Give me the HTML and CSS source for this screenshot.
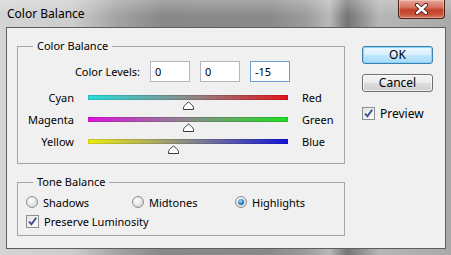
FILE: index.html
```html
<!DOCTYPE html>
<html lang="en">
<head>
  <meta charset="UTF-8">
  <title>Color Balance</title>
  <link rel="stylesheet" href="styles.css">
</head>
<body>

  <div class="window">
    <div class="titlebar">
      <span class="title">Color Balance</span>
      <button class="close">
        <svg width="15" height="12" viewBox="0 0 15 12">
          <path d="M3 2 L12 10 M12 2 L3 10" stroke="#4a1a12" stroke-width="4.2" stroke-linecap="round"/>
          <path d="M3 2 L12 10 M12 2 L3 10" stroke="#fff" stroke-width="2.4" stroke-linecap="round"/>
        </svg>
      </button>
    </div>

    <div class="client">
      <div class="groups">
        <fieldset class="group balance">
          <legend>Color Balance</legend>
          <div class="levels">
            <label>Color Levels:</label>
            <input class="num" value="0">
            <input class="num" value="0">
            <input class="num focus" value="-15">
          </div>

          <div class="slider">
            <span class="from">Cyan</span>
            <div class="bar cyan-red">
              <svg class="thumb" style="left: 50%" width="11" height="9" viewBox="0 0 11 9"><path d="M0.5 8.5 V6.5 Q0.5 5.2 2 4.3 L5.5 0.8 L9 4.3 Q10.5 5.2 10.5 6.5 V8.5 Z" fill="#fff" stroke="#3a3a3a"/></svg>
            </div>
            <span>Red</span>
          </div>
          <div class="slider">
            <span class="from">Magenta</span>
            <div class="bar magenta-green">
              <svg class="thumb" style="left: 50%" width="11" height="9" viewBox="0 0 11 9"><path d="M0.5 8.5 V6.5 Q0.5 5.2 2 4.3 L5.5 0.8 L9 4.3 Q10.5 5.2 10.5 6.5 V8.5 Z" fill="#fff" stroke="#3a3a3a"/></svg>
            </div>
            <span>Green</span>
          </div>
          <div class="slider">
            <span class="from">Yellow</span>
            <div class="bar yellow-blue">
              <svg class="thumb" style="left: 42.5%" width="11" height="9" viewBox="0 0 11 9"><path d="M0.5 8.5 V6.5 Q0.5 5.2 2 4.3 L5.5 0.8 L9 4.3 Q10.5 5.2 10.5 6.5 V8.5 Z" fill="#fff" stroke="#3a3a3a"/></svg>
            </div>
            <span>Blue</span>
          </div>
        </fieldset>

        <fieldset class="group tone">
          <legend>Tone Balance</legend>
          <div class="radios">
            <label class="option"><span class="radio"></span>Shadows</label>
            <label class="option"><span class="radio"></span>Midtones</label>
            <label class="option"><span class="radio on"></span>Highlights</label>
          </div>
          <label class="option check-row">
            <span class="check"><svg width="11" height="11" viewBox="0 0 11 11"><path d="M2 5.5 L4.4 8.3 L9.2 1.8" fill="none" stroke="#3b4d8c" stroke-width="1.9"/></svg></span>
            Preserve Luminosity
          </label>
        </fieldset>
      </div>

      <div class="actions">
        <button class="btn default">OK</button>
        <button class="btn">Cancel</button>
        <label class="option preview">
          <span class="check"><svg width="11" height="11" viewBox="0 0 11 11"><path d="M2 5.5 L4.4 8.3 L9.2 1.8" fill="none" stroke="#3b4d8c" stroke-width="1.9"/></svg></span>
          Preview
        </label>
      </div>
    </div>
  </div>

</body>
</html>
```

FILE: styles.css
```css
* {
  box-sizing: border-box;
}
body {
  margin: 0;
  font-family: "Noto Sans", "Open Sans", sans-serif;
  font-size: 11px;
  color: #000;
  background: #fff;
}
.window {
  width: 451px;
  height: 255px;
  display: flex;
  flex-direction: column;
  background: linear-gradient(90deg, #d4d4d4 0, #cdcdcd 16%, #a3a3a3 26%, #888 36%, #8a8a8a 60%, #9c9c9c 68%, #b9b9b9 73%, #747474 77%, #909090 80%, #b6b6b6 84%, #a9a9a9 100%);
}
.titlebar {
  height: 27px;
  display: flex;
  justify-content: space-between;
  align-items: flex-start;
  padding: 0 6px 0 7px;
  background: linear-gradient(180deg, rgba(255,255,255,0.25), rgba(255,255,255,0) 60%);
}
.title {
  font-size: 12px;
  line-height: 14px;
  margin-top: 7px;
}
.close {
  width: 47px;
  height: 19px;
  margin: 0;
  padding: 0;
  border: 1px solid #4f2018;
  border-top: none;
  border-radius: 0 0 4px 4px;
  background: linear-gradient(180deg, #e8a597 0, #d77563 40%, #c3402a 55%, #c9523a 80%, #d9765e 100%);
  box-shadow: inset 0 0 0 1px rgba(255,255,255,0.35);
  display: flex;
  align-items: center;
  justify-content: center;
}
.client {
  flex: 1;
  margin: 0 5px 6px 6px;
  background: #f0f0f0;
  border: 1px solid #5e5e5e;
  display: flex;
  padding: 11px 0 0 10px;
}
.groups {
  width: 328px;
}
.group {
  margin: 0;
  border: 1px solid #a5a5a5;
  padding: 8px 0 14px 0;
}
.group legend {
  margin-left: 15px;
  padding: 0 4px;
  line-height: 14px;
}
.levels {
  display: flex;
  align-items: center;
  gap: 10px;
  height: 21px;
}
.levels label {
  width: 122px;
  text-align: right;
}
.num {
  width: 40px;
  height: 21px;
  border: 1px solid #b4b7bd;
  background: #fff;
  padding: 0 4px;
  font: inherit;
  outline: none;
}
.num.focus {
  border-color: #6c9fd4;
}
.slider {
  display: grid;
  grid-template-columns: 56px 200px auto;
  column-gap: 14px;
  align-items: center;
  height: 16px;
  margin-top: 6px;
}
.levels + .slider {
  margin-top: 7px;
}
.slider .from {
  text-align: right;
}
.bar {
  height: 5px;
  position: relative;
  box-shadow: inset 0 0 0 1px rgba(0,0,0,0.12);
}
.cyan-red {
  background: linear-gradient(90deg, #26dcdc, #8a8a8a 50%, #e3141c);
}
.magenta-green {
  background: linear-gradient(90deg, #dc14dc, #8a8a8a 50%, #22dd22);
}
.yellow-blue {
  background: linear-gradient(90deg, #ecec12, #8a8a8a 50%, #1414d8);
}
.thumb {
  position: absolute;
  top: 6px;
  margin-left: -5px;
}
.tone {
  margin-top: 11px;
  padding: 5px 0 6px 8px;
}
.tone legend {
  margin-left: 7px;
}
.radios {
  display: grid;
  grid-template-columns: 106px 103px auto;
  height: 16px;
  align-items: center;
}
.option {
  display: flex;
  align-items: center;
  gap: 5px;
  height: 16px;
}
.check-row {
  margin-top: 3px;
}
.radio {
  width: 12px;
  height: 12px;
  border-radius: 50%;
  border: 1px solid #8c8f93;
  background: radial-gradient(circle at 40% 35%, #fff, #dcdcdc 70%, #cfcfcf);
  display: flex;
  align-items: center;
  justify-content: center;
}
.radio.on::after {
  content: "";
  width: 6px;
  height: 6px;
  border-radius: 50%;
  background: radial-gradient(circle at 40% 35%, #a6e1fb, #2a7bbf 55%, #0f3f73);
}
.check {
  width: 13px;
  height: 13px;
  border: 1px solid #8c8f93;
  background: linear-gradient(135deg, #e4e4e4, #fbfbfb);
  display: flex;
  align-items: center;
  justify-content: center;
}
.actions {
  margin-left: 17px;
  padding-top: 7px;
  display: flex;
  flex-direction: column;
  align-items: flex-start;
}
.btn {
  width: 71px;
  height: 18px;
  margin: 0 0 10px;
  padding: 0;
  font: inherit;
  font-size: 12px;
  line-height: 14px;
  border: 1px solid #707070;
  border-radius: 3px;
  background: linear-gradient(180deg, #f3f3f3 0, #ebebeb 48%, #dddddd 52%, #cfcfcf 100%);
  box-shadow: inset 0 0 0 1px rgba(255,255,255,0.7);
}
.btn.default {
  border-color: #3c7fb1;
  background: linear-gradient(180deg, #eaf6fd 0, #d9f0fc 48%, #bee6fd 52%, #a7d9f5 100%);
  box-shadow: inset 0 0 0 1px #8fd3f5;
}
.preview {
  margin-top: 3px;
  font-size: 12px;
}
```
